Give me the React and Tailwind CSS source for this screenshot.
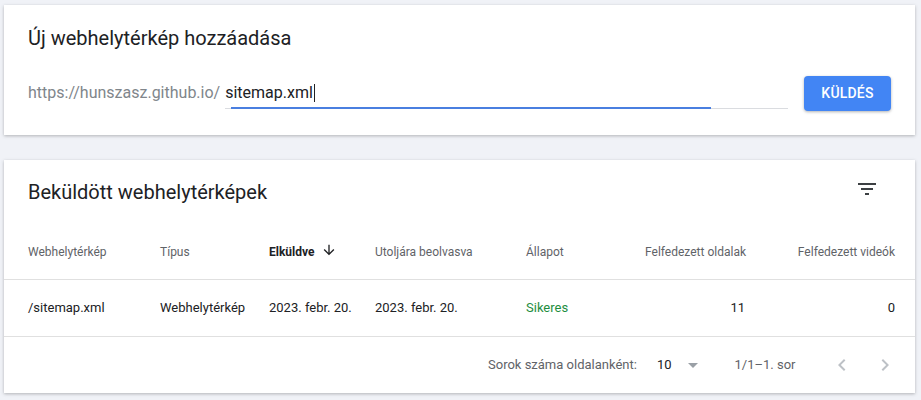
import React from "react";

const F = { fontFamily: "Roboto, 'Liberation Sans', sans-serif" };

function FilterIcon() {
  return (
    <svg width="24" height="24" viewBox="0 0 24 24" fill="#3c4043">
      <path d="M10 18h4v-2h-4v2zM3 6v2h18V6H3zm3 7h12v-2H6v2z" />
    </svg>
  );
}

function ArrowDown() {
  return (
    <svg width="16" height="16" viewBox="0 0 24 24" fill="#202124">
      <path d="M20 12l-1.41-1.41L13 16.17V4h-2v12.17l-5.58-5.59L4 12l8 8 8-8z" />
    </svg>
  );
}

function Caret() {
  return (
    <svg width="24" height="24" viewBox="0 0 24 24" fill="#9aa0a6">
      <path d="M7 10l5 5 5-5z" />
    </svg>
  );
}

function ChevLeft() {
  return (
    <svg width="24" height="24" viewBox="0 0 24 24" fill="#bdc1c6">
      <path d="M15.41 7.41L14 6l-6 6 6 6 1.41-1.41L10.83 12z" />
    </svg>
  );
}

function ChevRight() {
  return (
    <svg width="24" height="24" viewBox="0 0 24 24" fill="#bdc1c6">
      <path d="M10 6L8.59 7.41 13.17 12l-4.58 4.59L10 18l6-6z" />
    </svg>
  );
}

const cols = "grid grid-cols-[132px_109px_106px_151px_100px_120px_149px]";

export default function App() {
  return (
    <div style={F} className="w-[921px] h-[400px] bg-[#f0f2f7] pt-[5px] pl-[4px] pr-[6px] overflow-hidden">
      {/* Card 1 */}
      <div className="bg-white w-[911px] h-[130px] shadow-[0_1px_3px_rgba(60,64,67,0.35)] px-6 pt-[21px]">
        <div className="text-[20px] leading-[24px] text-[#202124]">Új webhelytérkép hozzáadása</div>
        <div className="flex items-center mt-[26px]">
          <div className="flex items-end w-[760px]">
            <span className="text-[16px] leading-[24px] text-[#80868b] pb-[4px]">https://hunszasz.github.io/</span>
            <div className="relative flex-1 ml-[5px] h-[30px] border-b border-[#dadce0]">
              <div className="text-[16px] leading-[24px] text-[#202124] pt-[2px] flex items-center">
                sitemap.xml
                <span className="inline-block w-[1.5px] h-[18px] bg-[#202124] ml-[1px]" />
              </div>
              <div className="absolute left-[6px] bottom-[-1px] w-[480px] h-[2px] bg-[#4a7fe0]" />
            </div>
          </div>
          <button className="ml-[16px] w-[87px] h-[35px] rounded-[4px] bg-[#4285f4] text-white text-[14px] font-medium tracking-[0.2px] shadow-[0_1px_3px_rgba(60,64,67,0.4)]">
            KÜLDÉS
          </button>
        </div>
      </div>

      {/* Card 2 */}
      <div className="bg-white w-[911px] h-[233px] mt-[25px] shadow-[0_1px_3px_rgba(60,64,67,0.35)]">
        <div className="h-[64px] flex items-center justify-between pl-6 pr-[36px]">
          <div className="text-[20px] leading-[24px] text-[#202124]">Beküldött webhelytérképek</div>
          <div className="-mt-[6px]"><FilterIcon /></div>
        </div>
        <div className={`${cols} h-[56px] items-center pl-6 text-[12px] text-[#5f6368] border-b border-[#e0e0e0]`}>
          <div>Webhelytérkép</div>
          <div>Típus</div>
          <div className="flex items-center font-bold text-[#202124]">
            Elküldve<span className="ml-[7px] -mt-[4px]"><ArrowDown /></span>
          </div>
          <div>Utoljára beolvasva</div>
          <div>Állapot</div>
          <div className="text-right">Felfedezett oldalak</div>
          <div className="text-right">Felfedezett videók</div>
        </div>
        <div className={`${cols} h-[57px] items-center pl-6 text-[13px] text-[#202124] border-b border-[#e0e0e0]`}>
          <div>/sitemap.xml</div>
          <div>Webhelytérkép</div>
          <div>2023. febr. 20.</div>
          <div>2023. febr. 20.</div>
          <div className="text-[#1e8e3e]">Sikeres</div>
          <div className="text-right pr-[1px]">11</div>
          <div className="text-right">0</div>
        </div>
        <div className="h-[55px] flex items-center text-[13px] text-[#5f6368] pl-[484px]">
          <span>Sorok száma oldalanként:</span>
          <span className="ml-[20px] text-[#202124]">10</span>
          <span className="ml-[9px]"><Caret /></span>
          <span className="ml-[30px]">1/1–1. sor</span>
          <span className="ml-[34px]"><ChevLeft /></span>
          <span className="ml-[19px]"><ChevRight /></span>
        </div>
      </div>
    </div>
  );
}
